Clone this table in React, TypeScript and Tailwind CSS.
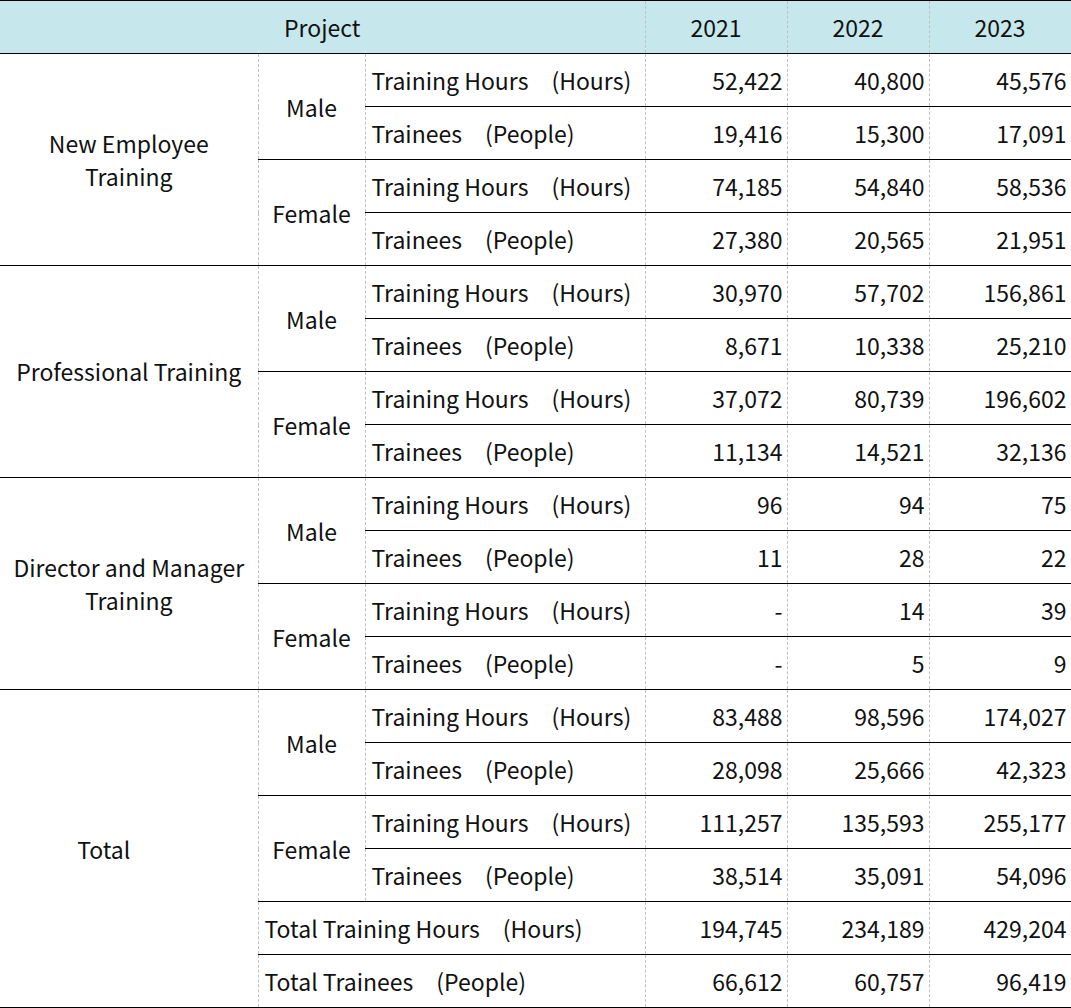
const groups = [
  {
    name: ['New Employee', 'Training'],
    rows: [
      { sex: 'Male', hours: ['52,422', '40,800', '45,576'], people: ['19,416', '15,300', '17,091'] },
      { sex: 'Female', hours: ['74,185', '54,840', '58,536'], people: ['27,380', '20,565', '21,951'] },
    ],
  },
  {
    name: ['Professional Training'],
    rows: [
      { sex: 'Male', hours: ['30,970', '57,702', '156,861'], people: ['8,671', '10,338', '25,210'] },
      { sex: 'Female', hours: ['37,072', '80,739', '196,602'], people: ['11,134', '14,521', '32,136'] },
    ],
  },
  {
    name: ['Director and Manager', 'Training'],
    rows: [
      { sex: 'Male', hours: ['96', '94', '75'], people: ['11', '28', '22'] },
      { sex: 'Female', hours: ['-', '14', '39'], people: ['-', '5', '9'] },
    ],
  },
]

const totals = [
  { sex: 'Male', hours: ['83,488', '98,596', '174,027'], people: ['28,098', '25,666', '42,323'] },
  { sex: 'Female', hours: ['111,257', '135,593', '255,177'], people: ['38,514', '35,091', '54,096'] },
]

// solid black row lines, dashed grey column lines
const cell =
  'h-[53px] p-0 border-b border-b-black [border-bottom-style:solid] border-r border-r-[#c0c0c0] [border-right-style:dashed]'
const num = `${cell} text-right pr-[4px]`
const label = `${cell} text-left pl-[6px]`
const center = `${cell} text-center`

function Nums({ values }: { values: string[] }) {
  return (
    <>
      {values.map((v, i) => (
        <td key={i} className={num}>
          {v}
        </td>
      ))}
    </>
  )
}

function SexRows({ sex, hours, people, first }: { sex: string; hours: string[]; people: string[]; first?: React.ReactNode }) {
  return (
    <>
      <tr>
        {first}
        <td rowSpan={2} className={center}>
          {sex}
        </td>
        <td className={label}>Training Hours　(Hours)</td>
        <Nums values={hours} />
      </tr>
      <tr>
        <td className={label}>Trainees　(People)</td>
        <Nums values={people} />
      </tr>
    </>
  )
}

export default function App() {
  return (
    <div className="w-[1071px] bg-white text-[#111] font-['Noto_Sans_CJK_TC','Noto_Sans',sans-serif] text-[23px] leading-[30px]">
      <table className="w-[1071px] border-collapse table-fixed border-t border-t-black">
        <colgroup>
          <col className="w-[258px]" />
          <col className="w-[107px]" />
          <col className="w-[280px]" />
          <col className="w-[142px]" />
          <col className="w-[142px]" />
          <col className="w-[142px]" />
        </colgroup>
        <thead>
          <tr className="bg-[#c6e8ec]">
            <td colSpan={3} className={center}>
              Project
            </td>
            <td className={center}>2021</td>
            <td className={center}>2022</td>
            <td className={center}>2023</td>
          </tr>
        </thead>
        <tbody>
          {groups.map((g) =>
            g.rows.map((r, i) => (
              <SexRows
                key={g.name[0] + r.sex}
                sex={r.sex}
                hours={r.hours}
                people={r.people}
                first={
                  i === 0 ? (
                    <td rowSpan={4} className={`${center} leading-[33px]`}>
                      {g.name.map((n) => (
                        <div key={n}>{n}</div>
                      ))}
                    </td>
                  ) : undefined
                }
              />
            ))
          )}
          {totals.map((r, i) => (
            <SexRows
              key={'total' + r.sex}
              sex={r.sex}
              hours={r.hours}
              people={r.people}
              first={
                i === 0 ? (
                  <td rowSpan={6} className={`${center} pr-[50px]`}>
                    Total
                  </td>
                ) : undefined
              }
            />
          ))}
          <tr>
            <td colSpan={2} className={label}>
              Total Training Hours　(Hours)
            </td>
            <Nums values={['194,745', '234,189', '429,204']} />
          </tr>
          <tr>
            <td colSpan={2} className={label}>
              Total Trainees　(People)
            </td>
            <Nums values={['66,612', '60,757', '96,419']} />
          </tr>
        </tbody>
      </table>
    </div>
  )
}
